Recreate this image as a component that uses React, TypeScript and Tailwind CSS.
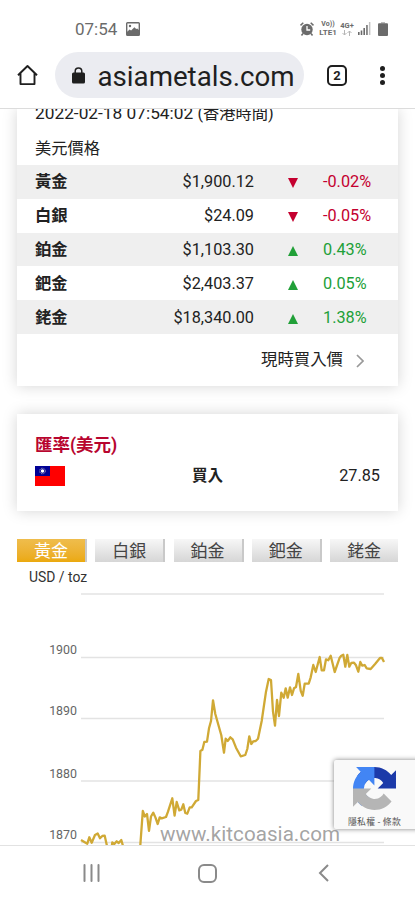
interface Metal {
  name: string
  price: string
  change: string
  up: boolean
}

const metals: Metal[] = [
  { name: "黃金", price: "$1,900.12", change: "-0.02%", up: false },
  { name: "白銀", price: "$24.09", change: "-0.05%", up: false },
  { name: "鉑金", price: "$1,103.30", change: "0.43%", up: true },
  { name: "鈀金", price: "$2,403.37", change: "0.05%", up: true },
  { name: "銠金", price: "$18,340.00", change: "1.38%", up: true },
]

const gridLines = [
  { y: 594, label: "" },
  { y: 657.5, label: "1900" },
  { y: 718.5, label: "1890" },
  { y: 781, label: "1880" },
  { y: 842.5, label: "1870" },
]

const goldLine =
  "81,840 83.5,841.5 87.3,843.7 89.3,837.3 91.7,842.7 95,835 97.7,833.5 100,838.3 102.3,836 104.7,835.7 107,846 " +
  "111.7,847 112.3,842.5 114.3,844 116.7,841.3 118.7,843 121.3,840 123,846 128,856 136,856 140.3,845.5 142.8,811 144.8,816.5 " +
  "147,814 149,830.8 151,816.5 153.3,812.7 155.4,817.4 157.7,824 159.7,817.4 161.7,818.4 166,817 168,811.7 172.3,798.3 " +
  "174.6,815.7 176.7,802 179.3,810.3 181.3,809.7 183.3,804.3 185.3,813 187.3,813.7 189.7,807.3 191.7,807.3 196,801 " +
  "198.3,800 200.4,751 202.4,749.7 204.3,742 207,741.7 209,728.3 211,721 213,700.3 215.3,714 221.3,735.3 224,752.7 " +
  "225.7,738.7 227.7,741 230.3,737.3 232.7,739.3 236,747.7 240.7,756.3 245.3,755 247.3,749 249.3,736.3 251.3,744 " +
  "253.3,741.3 255.7,741 258,738.7 261.7,721 266,691.7 268.7,679 271,680 273,711.7 275,725.7 277,700 279,716 " +
  "281.3,692.7 283.7,697.7 285.7,688.3 287.7,697.7 290,687.3 292,695 294,688.3 296,687 298.3,674 300.7,690.7 " +
  "302.7,695.7 304.7,683.7 308.7,683.7 310.7,677.3 313.3,665 315.7,672 319.7,657 321.7,670.3 324,670.3 326,659.3 " +
  "328.3,660.3 330.7,655.7 334.7,672 339.7,657.7 341.3,655.7 343.3,654.7 345.3,666.7 347.3,655 349.3,666.7 351.3,663 " +
  "354,662.7 356,665.3 358.3,671.7 360.3,662 362.3,665.7 364.7,665 366.7,668.3 370.7,669 375.3,663.7 380,658 382,658 384,662"

const StatusBar = () => (
  <div className="flex h-[52px] items-center pt-[5px] pl-[75px] pr-[27px] text-[#6b6b6b]">
    <span className="text-[17px] leading-5">07:54</span>
    <svg className="ml-[9px] h-[14px] w-[14px]" viewBox="0 0 14 14">
      <path
        fill="currentColor"
        fillRule="evenodd"
        d="M1.5 0h11A1.5 1.5 0 0 1 14 1.500v11a1.500 1.500 0 0 1-1.500 1.500h-11A1.500 1.500 0 0 1 0 12.500v-11A1.500 1.500 0 0 1 1.500 0zM1.400 1.400v8.400l2-2.300 1.700 1 3.300-3.300 1.800 1.900 1.100-.7 1.300 1.500V1.400zM4 2.800a1.200 1.200 0 1 1 0 2.400 1.200 1.200 0 0 1 0-2.400z"
      />
    </svg>
    <svg className="ml-auto h-[14px] w-[14px]" viewBox="0 0 14 14">
      <circle cx="7" cy="7.500" r="5.700" fill="currentColor" />
      <path d="M.5 3.400 3.300.800M13.500 3.400 10.700.800M3 11.500 1.500 13.500M11 11.500l1.500 2" stroke="currentColor" strokeWidth="1.500" fill="none" />
      <path d="M7 4v4h3.200" stroke="#fff" strokeWidth="1.300" fill="none" />
    </svg>
    <div className="ml-[5px] w-[18px] text-center text-[8px] font-bold leading-[8px]">
      <div className="h-[8px] text-[7px] leading-[7px]">Vo))</div>
      <div>LTE1</div>
    </div>
    <div className="ml-[3px] w-[14px] text-center text-[7.500px] font-bold leading-[8px]">
      <div>4G+</div>
      <svg className="mx-auto h-[6px] w-[10px]" viewBox="0 0 10 6">
        <path d="M2.500 0v5M.5 3l2 2 2-2M7.500 6V1M5.500 3l2-2 2 2" stroke="#b5b5b5" fill="none" />
      </svg>
    </div>
    <svg className="ml-[4px] h-[13px] w-[13px]" viewBox="0 0 13 13">
      <path d="M0 10h1.600v3H0zM2.700 8.500h1.600V13H2.700zM5.400 6H7v7H5.400zM8.200 3h1.500v10H8.200z" fill="currentColor" />
      <path d="M10.900 0h1.500v13h-1.500z" fill="#c2c2c2" />
    </svg>
    <svg className="ml-[7px] h-[14px] w-[10px]" viewBox="0 0 10 14">
      <path d="M3 0h4v1.500H3z" fill="#bbb" />
      <rect y="1.300" width="10" height="12.700" rx="1" fill="currentColor" />
    </svg>
  </div>
)

const AddressBar = () => (
  <div className="flex h-[46px] items-center pl-[17px] pr-[30px] text-[#1f1f1f]">
    <svg className="h-[22px] w-[21px] shrink-0" viewBox="0 0 21 22">
      <path d="M1 11.200 10.500 2l9.500 9.200M3.500 9.500v10.600h14V9.500" stroke="currentColor" strokeWidth="1.900" fill="none" strokeLinejoin="round" />
    </svg>
    <div className="ml-[17px] flex h-[46px] w-[249px] shrink-0 items-center rounded-full bg-[#ebecf1] pl-[17px]">
      <svg className="h-[17px] w-[13px] shrink-0" viewBox="0 0 13 17">
        <rect y="5.600" width="13" height="11" rx="1.500" fill="currentColor" />
        <path d="M3.200 6V4.200a3.300 3.300 0 0 1 6.600 0V6" stroke="currentColor" strokeWidth="1.500" fill="none" />
      </svg>
      <span className="ml-[12.500px] pt-[3px] text-[27.700px] leading-8">asiametals.com</span>
    </div>
    <div className="ml-[23px] flex h-[21px] w-[20px] items-center justify-center rounded-[5px] border-2 border-current text-[13px] font-bold leading-none">
      2
    </div>
    <div className="ml-auto flex flex-col gap-[2px]">
      <i className="block size-[5px] rounded-full bg-current" />
      <i className="block size-[5px] rounded-full bg-current" />
      <i className="block size-[5px] rounded-full bg-current" />
    </div>
  </div>
)

const PriceCard = () => (
  <section className="mx-[17px] flex h-[277px] w-[381px] flex-col bg-white shadow-[0_0_14px_rgba(0,0,0,0.17)]">
    <div className="-mt-[8px] h-6 shrink-0 whitespace-nowrap pl-[18px] leading-6">
      <span className="text-[17.300px]">2022-02-18 07:54:02 </span>(香港時間)
    </div>
    <div className="mt-[11px] h-[29px] shrink-0 pl-[18px] pt-px leading-6">美元價格</div>
    {metals.map((metal) => (
      <div key={metal.name} className="flex h-[33.800px] shrink-0 items-center pl-[18px] pt-px leading-6 odd:bg-[#efefef]">
        <span className="w-[60px] font-bold">{metal.name}</span>
        <span className="w-[159px] text-right">{metal.price}</span>
        <svg className="ml-[34px] mt-[2px] h-[10px] w-[10px]" viewBox="0 0 10 10">
          {metal.up ? <path d="M5 0l5 10H0z" fill="#21a038" /> : <path d="M0 0h10L5 10z" fill="#c4002f" />}
        </svg>
        <span className={metal.up ? "ml-[25px] text-[#21a038]" : "ml-[25px] text-[#c4002f]"}>{metal.change}</span>
      </div>
    ))}
    <div className="flex h-[52px] shrink-0 items-center justify-end pr-[34px]">
      <span className="text-[16.400px] leading-6">現時買入價</span>
      <svg className="ml-[13px] mt-[3px] h-[14px] w-[8px]" viewBox="0 0 8 14">
        <path d="M1 1l6 6-6 6" stroke="#999" strokeWidth="1.700" fill="none" />
      </svg>
    </div>
  </section>
)

const RateCard = () => (
  <section className="mx-[17px] mt-[28px] h-[97px] w-[381px] bg-white px-[18px] pt-[19px] shadow-[0_0_14px_rgba(0,0,0,0.17)]">
    <h2 className="text-[17.500px] font-bold leading-6 text-[#b8052f]">匯率(美元)</h2>
    <div className="mt-[7px] flex items-center leading-6">
      <svg className="h-[20px] w-[30px]" viewBox="0 0 30 20">
        <path d="M0 0h30v20H0z" fill="#f00" />
        <path d="M0 0h15v10H0z" fill="#000095" />
        <circle cx="7.500" cy="5" r="2.800" fill="none" stroke="#aab" strokeWidth="1" strokeDasharray="1 .6" />
        <circle cx="7.500" cy="5" r="1.700" fill="#fff" />
      </svg>
      <span className="ml-[127px] text-[15.500px] font-bold">買入</span>
      <span className="ml-auto">27.85</span>
    </div>
  </section>
)

const MetalTabs = () => (
  <div className="mx-[17px] mt-[28px] flex w-[381px] gap-[8.250px] text-[17px] leading-[23px]">
    {metals.map((metal, i) => (
      <button
        key={metal.name}
        className={
          i === 0
            ? "h-[23px] w-[70px] border-r-2 border-[#c9c9c9] bg-linear-to-b from-[#efbd4c] to-[#eba90c] pt-px text-white"
            : "h-[23px] w-[70px] border-r-2 border-[#c9c9c9] bg-linear-to-b from-[#f7f7f7] to-[#d6d6d6] pt-px text-[#444] last:w-[68px] last:border-r-0"
        }
      >
        {metal.name}
      </button>
    ))}
  </div>
)

const PriceChart = () => (
  <svg className="block h-[283px] w-[415px]" viewBox="0 562 415 283">
    <text x="29" y="582" fontSize="13.900" fill="#333">USD / toz</text>
    {gridLines.map((line) => (
      <g key={line.y}>
        <path d={`M81 ${line.y}H384`} stroke="#e3e3e3" strokeWidth="1.300" />
        <text x="77" y={line.y - 3.5} fontSize="12.400" fill="#666" textAnchor="end">{line.label}</text>
      </g>
    ))}
    <polyline points={goldLine} fill="none" stroke="#d0a935" strokeWidth="2.300" strokeLinejoin="round" />
    <text x="160" y="841" fontSize="20.600" textLength="180" fill="#999" fillOpacity="0.9">www.kitcoasia.com</text>
  </svg>
)

const RecaptchaBadge = () => (
  <div className="absolute left-[334px] top-[651px] flex h-[69px] w-[90px] flex-col rounded-[2px] bg-[#f9f9f9] pl-[19px] pt-[7px] shadow-[0_0_5px_gray]">
    <svg className="h-[43px] w-[43px]" viewBox="0 0 64 64">
      <path fill="#1c3aa9" d="M64 31.955l-.033-1.370V4.687l-7.160 7.160C50.948 4.674 42.033.093 32.050.093c-10.400 0-19.622 4.960-25.458 12.640l11.736 11.860a15.550 15.550 0 0 1 4.754-5.334c2.050-1.600 4.952-2.906 8.968-2.906.485 0 .860.057 1.135.163 4.976.393 9.288 3.140 11.828 7.124l-8.307 8.307L64 31.953" />
      <path fill="#4285f4" d="M31.862.094l-1.370.033H4.594l7.160 7.160C4.580 13.147 0 22.060 0 32.046c0 10.400 4.960 19.622 12.640 25.458L24.500 45.768a15.550 15.550 0 0 1-5.334-4.754c-1.600-2.050-2.906-4.952-2.906-8.968 0-.485.057-.860.163-1.135.393-4.976 3.140-9.288 7.124-11.828l8.307 8.307L31.860.095" />
      <path fill="#b5b5b5" d="M.001 32.045l.033 1.370v25.898l7.160-7.160c5.860 7.173 14.774 11.754 24.760 11.754 10.400 0 19.622-4.960 25.458-12.640l-11.736-11.860a15.550 15.550 0 0 1-4.754 5.334c-2.050 1.600-4.952 2.906-8.968 2.906-.485 0-.860-.057-1.135-.163-4.976-.393-9.288-3.140-11.828-7.124l8.307-8.307c-10.522.040-22.400.066-27.295-.005" />
    </svg>
    <div className="-ml-[5px] mt-[6px] whitespace-nowrap text-[8.800px] leading-3 tracking-[0.280px] text-[#555]">隱私權 - 條款</div>
  </div>
)

const NavigationBar = () => (
  <nav className="relative flex h-[55px] items-center border-t border-[#e2e2e2] bg-white pl-[83px] text-[#8a8a8a]">
    <svg className="h-[18px] w-[17px]" viewBox="0 0 17 18">
      <path d="M1.500 1v16M8.500 1v16M15.500 1v16" stroke="currentColor" strokeWidth="2" strokeLinecap="round" />
    </svg>
    <div className="ml-[98px] h-[19px] w-[19px] rounded-[6px] border-2 border-current" />
    <svg className="ml-[101px] h-[18px] w-[12px]" viewBox="0 0 12 18">
      <path d="M10 1 2 9l8 8" stroke="currentColor" strokeWidth="2" fill="none" />
    </svg>
  </nav>
)

const App = () => (
  <div className="flex h-[900px] w-[415px] flex-col overflow-hidden bg-white font-['Roboto','Noto_Sans_CJK_TC',sans-serif] text-[16.250px] text-[#222]">
    <header className="h-[109px] shrink-0 border-b border-[#dcdcdc]">
      <StatusBar />
      <AddressBar />
    </header>
    {/* Scrolled page content */}
    <main className="relative h-[736px] shrink-0 overflow-hidden">
      <PriceCard />
      <RateCard />
      <MetalTabs />
      <PriceChart />
      <RecaptchaBadge />
    </main>
    <NavigationBar />
  </div>
)

export default App
